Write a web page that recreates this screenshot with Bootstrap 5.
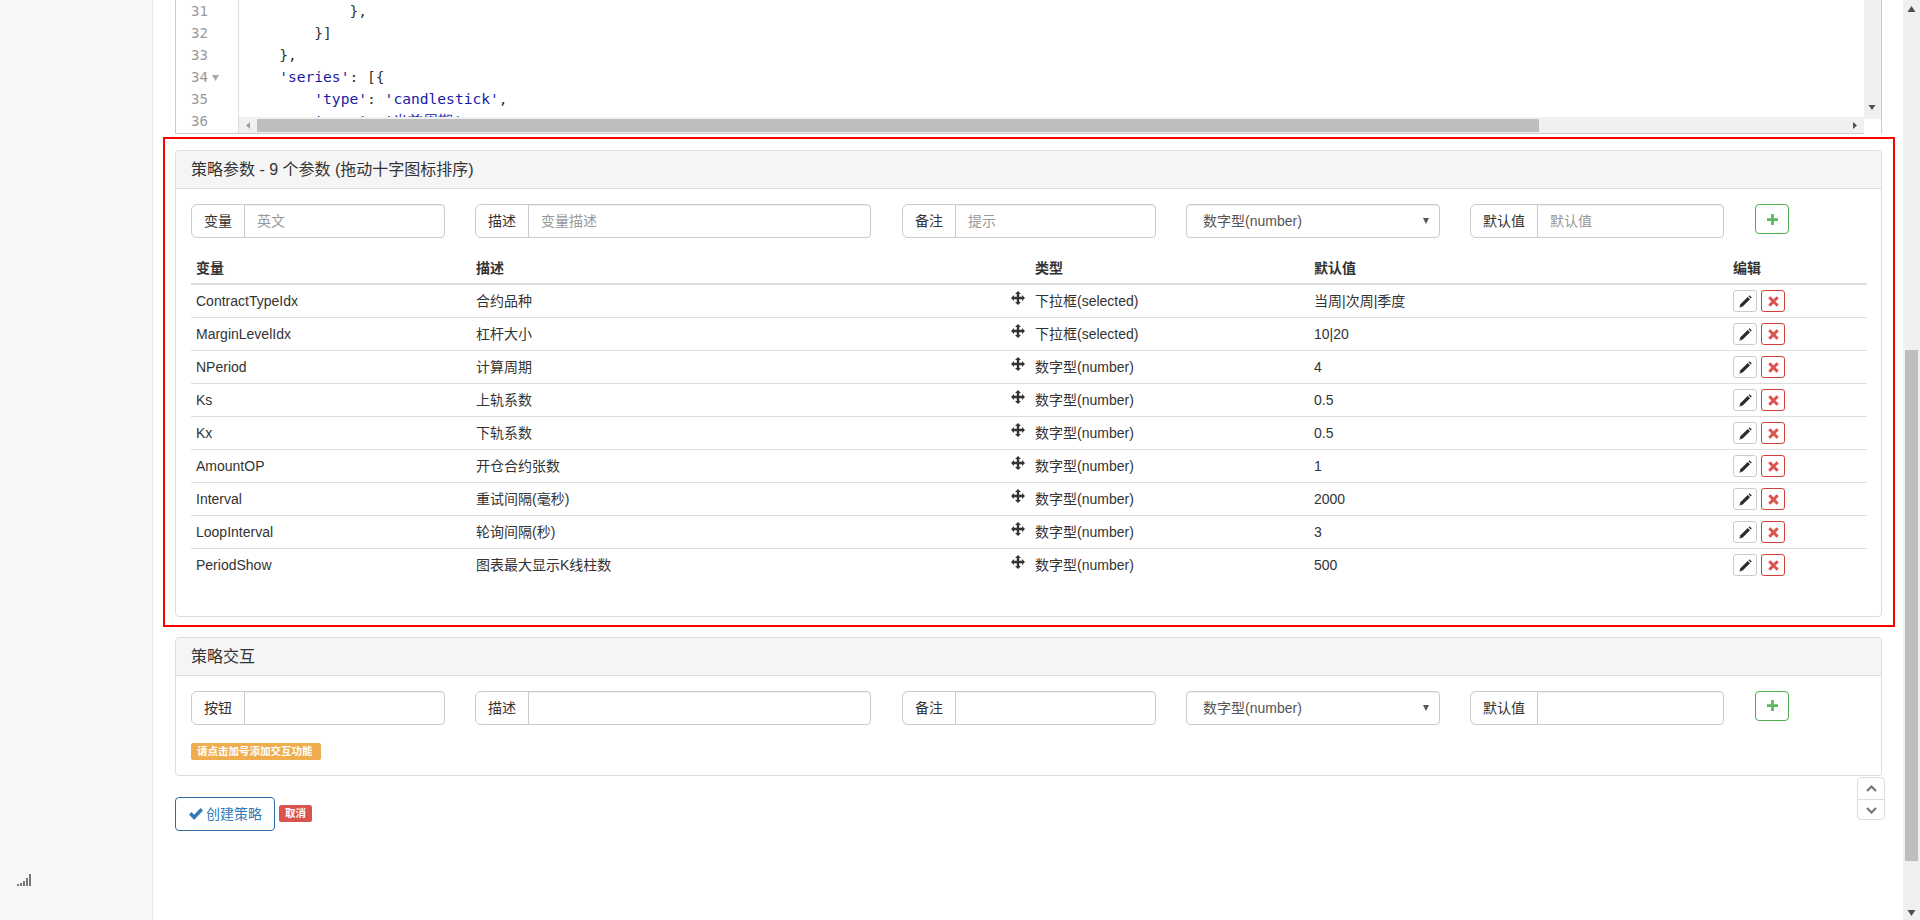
<!DOCTYPE html>
<html lang="zh">
<head>
<meta charset="utf-8">
<title>策略参数</title>
<link rel="stylesheet" href="https://cdn.jsdelivr.net/npm/bootstrap@5.3.0/dist/css/bootstrap.min.css">
<style>
html,body{height:920px;overflow:hidden}
body{font-family:"Liberation Sans","Noto Sans CJK SC",sans-serif;font-size:14px;color:#333;background:#fff;line-height:20px}
.shell{height:920px}
.side-rail{width:153px;background:#f8f8f8;border-right:1px solid #e7e7e7;padding:0 0 34px 17px}
.main-area{width:1750px;padding:0 21px 0 22px}
.page-scroll{width:17px;background:#f0f0f0}
.page-thumb{width:13px;height:511px;margin:333px 2px 0;background:#bebebe}
.arrow-box{width:17px;height:17px}
.code-box{height:134px;border:1px solid #ccc;border-top:0;font-family:"DejaVu Sans Mono","Liberation Mono",monospace;font-size:14.6px;line-height:22px;background:#fff}
.gutter{width:63px;padding-left:15px;color:#999;border-right:1px solid #ddd;overflow:hidden;flex:none}
.gutter-line{height:22px;display:flex;align-items:center;gap:4px;font-size:14px}
.code-col{min-width:0}
.code-view{height:117px;overflow:hidden;width:1627px;padding-left:5px;color:#333}
.code-line{height:22px;white-space:pre}
.str{color:#1a1aa6}
.v-track{width:17px;height:117px;background:#f0f0f0}
.h-track{height:16px;background:#f0f0f0;padding-top:2px}
.h-thumb{width:1282px;height:13px;background:#bebebe;margin-left:1px}
.h-arr{width:17px;height:13px}
.mark-frame{border:2px solid #f00;margin:3px -13px 0 -12px;padding:11px 11px 8px 10px}
.param-panel{border:1px solid #ddd;border-radius:4px;--bs-card-border-color:#ddd}
.param-panel .card-header{height:38px;padding:0 15px;background:#f5f5f5;border-bottom:1px solid #ddd;font-size:16px;line-height:37px;color:#333}
.param-panel .card-body{padding:15px}
.panel-two{margin-top:10px}
.form-line{gap:30px}
.grp-a{width:254px}.grp-b{width:396px}.grp-c{width:254px;margin-left:1px}.grp-d{width:254px}.grp-e{width:254px}
.input-group-text{background:#fff;border-color:#ccc;padding:6px 12px;font-size:14px;color:#333;height:34px;line-height:20px}
.form-control{height:34px;border-color:#ccc;padding:6px 12px;font-size:14px;color:#555;box-shadow:inset 0 1px 1px rgba(0,0,0,.075);border-radius:4px}
.form-control::placeholder{color:#999}
.type-pick{height:34px;font-size:14px;color:#555;padding:6px 24px 6px 16px;border-color:#ccc;box-shadow:inset 0 1px 1px rgba(0,0,0,.075);border-radius:4px;background-size:6px 6px;background-position:right 10px center;background-image:url("data:image/svg+xml,%3Csvg xmlns='http://www.w3.org/2000/svg' viewBox='0 0 6 6'%3E%3Cpath d='M0 0h6L3 6z' fill='%23555'/%3E%3C/svg%3E")}
.add-btn{width:34px;height:30px;padding:0;border:1px solid #4cae4c;border-radius:4px;background:#fff;margin-left:1px;display:flex;align-items:center;justify-content:center}
.param-table{margin:15px 0 19px;table-layout:fixed;width:1676px;--bs-table-color:#333;--bs-table-bg:#fff;--bs-table-border-color:#ddd}
.param-table th{padding:5px;font-weight:700;line-height:20px;border-bottom:2px solid #ddd}
.param-table td{padding:5px;line-height:22px;height:33px;border-bottom:1px solid #ddd;vertical-align:top}
.param-table tbody tr:last-child td{border-bottom:0}
.c1{width:280px}.c2{width:535px}.c3{width:24px}.c4{width:279px}.c5{width:419px}.c6{width:139px}
.grip{display:block;margin-top:1px}
.act-btn{width:24px;height:22px;padding:0;background:#fff;border:1px solid #ccc;border-radius:3px;display:flex;align-items:center;justify-content:center}
.act-del{border-color:#d43f3a}
.note-tag{margin-top:18px;background:#f0ad4e;color:#fff;font-size:10.5px;font-weight:700;line-height:11px;padding:3px 6px;border-radius:2.6px;width:130px;height:17px;text-align:left;white-space:nowrap;display:block}
.action-row{margin-top:21px}
.create-btn{width:100px;height:34px;padding:0 0 0 13px;border:1px solid #2e6da4;border-radius:4px;background:#fff;color:#337ab7;font-size:14px;display:flex;align-items:center;gap:3px}
.cancel-tag{background:#d9534f;color:#fff;font-size:10.5px;font-weight:700;line-height:11px;padding:3px 6px;border-radius:2.6px;height:17px;width:33px}
.jump-box{position:absolute;left:1857px;top:777px;width:28px;height:43px;background:#fff;border:1px solid #ddd;border-radius:4px}
.jump-cell{height:21px;display:flex;align-items:center;justify-content:center}
.jump-cell+.jump-cell{border-top:1px solid #ddd}
</style>
</head>
<body>
<div class="shell d-flex">
  <aside class="side-rail d-flex flex-column justify-content-end flex-shrink-0">
    <svg width="15" height="12" viewBox="0 0 15 12" aria-hidden="true"><g fill="#777"><rect x="0" y="10" width="2" height="2"/><rect x="3" y="9" width="2" height="3"/><rect x="6" y="7" width="2" height="5"/><rect x="9" y="4" width="2" height="8"/><rect x="12" y="0" width="2" height="12"/></g></svg>
  </aside>

  <main class="main-area flex-shrink-0">
    <div class="code-box d-flex">
      <div class="gutter">
        <div class="gutter-line">31</div>
        <div class="gutter-line">32</div>
        <div class="gutter-line">33</div>
        <div class="gutter-line">34<svg width="7" height="7" viewBox="0 0 7 7"><path d="M0 1h7L3.500 7z" fill="#aaa"/></svg></div>
        <div class="gutter-line">35</div>
        <div class="gutter-line">36</div>
      </div>
      <div class="code-col flex-grow-1">
        <div class="d-flex">
          <div class="code-view flex-grow-1">
            <div class="code-line">            },</div>
            <div class="code-line">        }]</div>
            <div class="code-line">    },</div>
            <div class="code-line">    <span class="str">'series'</span>: [{</div>
            <div class="code-line">        <span class="str">'type'</span>: <span class="str">'candlestick'</span>,</div>
            <div class="code-line">        <span class="str">'name'</span>: <span class="str">'当前周期'</span>,</div>
          </div>
          <div class="v-track d-flex flex-column justify-content-end align-items-center flex-shrink-0">
            <svg class="arrow-box" viewBox="0 0 17 17"><path d="M4.500 5h7L8 10z" fill="#505050"/></svg>
          </div>
        </div>
        <div class="h-track d-flex">
          <svg class="h-arr flex-shrink-0" viewBox="0 0 17 13"><path d="M11 3v7L7 6.500z" fill="#a0a0a0"/></svg>
          <div class="h-thumb flex-shrink-0"></div>
          <div class="flex-grow-1"></div>
          <svg class="h-arr flex-shrink-0" viewBox="0 0 17 13"><path d="M6 3v7l4-3.500z" fill="#505050"/></svg>
          <div class="arrow-box flex-shrink-0 bg-white"></div>
        </div>
      </div>
    </div>

    <div class="mark-frame">
      <section class="card param-panel">
        <div class="card-header">策略参数 - 9 个参数 (拖动十字图标排序)</div>
        <div class="card-body">
          <div class="d-flex form-line align-items-start">
            <div class="input-group flex-nowrap grp-a"><span class="input-group-text">变量</span><input class="form-control" placeholder="英文"></div>
            <div class="input-group flex-nowrap grp-b"><span class="input-group-text">描述</span><input class="form-control" placeholder="变量描述"></div>
            <div class="input-group flex-nowrap grp-c"><span class="input-group-text">备注</span><input class="form-control" placeholder="提示"></div>
            <select class="form-select grp-d type-pick"><option>数字型(number)</option></select>
            <div class="input-group flex-nowrap grp-e"><span class="input-group-text">默认值</span><input class="form-control" placeholder="默认值"></div>
            <button class="add-btn" type="button" aria-label="添加"><svg width="11" height="11" viewBox="0 0 12 12"><path d="M4.500 0h3v4.500H12v3H7.500V12h-3V7.500H0v-3h4.500z" fill="#5cb85c"/></svg></button>
          </div>

          <table class="table param-table">
            <colgroup><col class="c1"><col class="c2"><col class="c3"><col class="c4"><col class="c5"><col class="c6"></colgroup>
            <thead><tr><th>变量</th><th>描述</th><th></th><th>类型</th><th>默认值</th><th>编辑</th></tr></thead>
            <tbody id="rows"></tbody>
          </table>
        </div>
      </section>
    </div>

    <section class="card param-panel panel-two">
      <div class="card-header">策略交互</div>
      <div class="card-body">
        <div class="d-flex form-line align-items-start">
          <div class="input-group flex-nowrap grp-a"><span class="input-group-text">按钮</span><input class="form-control"></div>
          <div class="input-group flex-nowrap grp-b"><span class="input-group-text">描述</span><input class="form-control"></div>
          <div class="input-group flex-nowrap grp-c"><span class="input-group-text">备注</span><input class="form-control"></div>
          <select class="form-select grp-d type-pick"><option>数字型(number)</option></select>
          <div class="input-group flex-nowrap grp-e"><span class="input-group-text">默认值</span><input class="form-control"></div>
          <button class="add-btn" type="button" aria-label="添加"><svg width="11" height="11" viewBox="0 0 12 12"><path d="M4.500 0h3v4.500H12v3H7.500V12h-3V7.500H0v-3h4.500z" fill="#5cb85c"/></svg></button>
        </div>
        <span class="note-tag">请点击加号添加交互功能</span>
      </div>
    </section>

    <div class="action-row d-flex align-items-center gap-1">
      <button class="create-btn" type="button"><svg width="14" height="12" viewBox="0 0 14 12"><path d="M0 6.500 2.500 4l2.700 2.700L11.500 0 14 2.500 5.200 12z" fill="#337ab7"/></svg>创建策略</button>
      <span class="cancel-tag">取消</span>
    </div>
  </main>

  <div class="page-scroll d-flex flex-column flex-shrink-0">
    <svg class="arrow-box" viewBox="0 0 17 17"><path d="M4.500 12h8L8.500 6z" fill="#505050"/></svg>
    <div class="page-thumb"></div>
    <svg class="arrow-box mt-auto" viewBox="0 0 17 17"><path d="M4.500 7h8L8.500 13z" fill="#505050"/></svg>
  </div>
</div>

<div class="jump-box">
  <div class="jump-cell"><svg width="11" height="7" viewBox="0 0 11 7"><path d="M1 6l4.500-4.500L10 6" fill="none" stroke="#777" stroke-width="2.200"/></svg></div>
  <div class="jump-cell"><svg width="11" height="7" viewBox="0 0 11 7"><path d="M1 1l4.500 4.500L10 1" fill="none" stroke="#777" stroke-width="2.200"/></svg></div>
</div>

<script src="https://cdn.jsdelivr.net/npm/bootstrap@5.3.0/dist/js/bootstrap.bundle.min.js"></script>
<script>
var data=[
["ContractTypeIdx","合约品种","下拉框(selected)","当周|次周|季度"],
["MarginLevelIdx","杠杆大小","下拉框(selected)","10|20"],
["NPeriod","计算周期","数字型(number)","4"],
["Ks","上轨系数","数字型(number)","0.5"],
["Kx","下轨系数","数字型(number)","0.5"],
["AmountOP","开仓合约张数","数字型(number)","1"],
["Interval","重试间隔(毫秒)","数字型(number)","2000"],
["LoopInterval","轮询间隔(秒)","数字型(number)","3"],
["PeriodShow","图表最大显示K线柱数","数字型(number)","500"]];
var grip='<svg class="grip" width="14" height="14" viewBox="0 0 14 14"><path d="M7 0l3 3H8.200v2.800H11V4l3 3-3 3V8.200H8.200V11H10l-3 3-3-3h1.800V8.200H3V10L0 7l3-3v1.800h2.800V3H4z" fill="#333"/></svg>';
var pen='<svg width="13" height="13" viewBox="0 0 13 13"><path d="M.5 12.500l.9-3.200L8.700 2l2.300 2.300L3.700 11.600z" fill="#2b2b2b"/><path d="M9.500 1.200l1-1 2.300 2.300-1 1z" fill="#2b2b2b"/><path d="M.5 12.500l.5-1.800 1.300 1.300z" fill="#337ab7"/></svg>';
var del='<svg width="11" height="11" viewBox="0 0 11 11"><path d="M1.300 1.300l8.400 8.400M9.700 1.300l-8.400 8.400" stroke="#d9534f" stroke-width="3" fill="none"/></svg>';
document.getElementById("rows").innerHTML=data.map(function(r){
 return '<tr><td>'+r[0]+'</td><td>'+r[1]+'</td><td>'+grip+'</td><td>'+r[2]+'</td><td>'+r[3]+'</td><td><div class="d-flex gap-1"><button class="act-btn" type="button">'+pen+'</button><button class="act-btn act-del" type="button">'+del+'</button></div></td></tr>';
}).join("");
</script>
</body>
</html>
